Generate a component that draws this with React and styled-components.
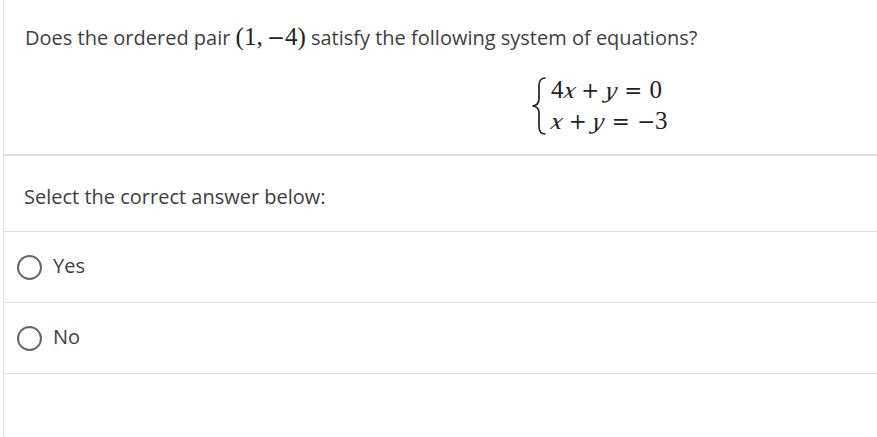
import React from "react";
import styled, { createGlobalStyle } from "styled-components";

const Global = createGlobalStyle`
  html, body { margin: 0; padding: 0; background: #fff; }
  body { font-family: "Open Sans", "Liberation Sans", sans-serif; color: #3e3e3e; }
`;

const Frame = styled.div`
  margin-left: 3px;
  border-left: 1px solid #e2e2e2;
  min-height: 437px;
  box-sizing: border-box;
`;

const Question = styled.section`
  height: 156px;
  box-sizing: border-box;
  padding: 23px 21px 0;
  border-bottom: 2px solid #dedede;
`;

const Prompt = styled.p`
  margin: 0;
  font-size: 20px;
  line-height: 28px;
  white-space: nowrap;
`;

const Math = styled.span`
  font-family: "Liberation Serif", "Times New Roman", serif;
  font-size: 25px;
  color: #222;
`;

const Thin = styled.span`
  display: inline-block;
  width: ${(p) => p.w}em;
`;

const Italic = styled.span`
  display: inline-block;
  font-family: "DejaVu Serif", serif;
  font-style: italic;
  font-size: 0.84em;
  transform: skewX(-13deg);
`;

const Sym = styled.span`
  font-family: "DejaVu Serif", serif;
  font-size: 0.86em;
`;

const Display = styled.div`
  display: flex;
  align-items: center;
  margin: 23px 0 0 506px;
  gap: 4px;
`;

const Brace = styled.svg`
  display: block;
  width: 16px;
  height: 58px;
  flex: none;
`;

const Rows = styled.div`
  display: flex;
  flex-direction: column;
  font-family: "Liberation Serif", "Times New Roman", serif;
  font-size: 25px;
  line-height: 29px;
  color: #222;
  white-space: nowrap;
`;

const Op = styled.span`
  font-family: "DejaVu Serif", serif;
  font-size: 0.86em;
  margin: 0 ${(p) => (p.$rel ? "0.34em" : "0.27em")};
`;

const Instruction = styled.div`
  height: 76px;
  display: flex;
  align-items: center;
  padding: 6px 20px 0;
  box-sizing: border-box;
  border-bottom: 1px solid #e0e0e0;
  font-size: 20px;
`;

const Option = styled.label`
  height: 71px;
  box-sizing: border-box;
  display: flex;
  align-items: center;
  gap: 11px;
  padding-left: 13px;
  border-bottom: 1px solid #e0e0e0;
  font-size: 20px;
  cursor: pointer;
`;

const Label = styled.span`
  padding-bottom: 4px;
`;

const Radio = styled.span`
  width: 25px;
  height: 25px;
  box-sizing: border-box;
  border: 2.5px solid #666;
  border-radius: 50%;
  flex: none;
`;

function Eq({ parts }) {
  return (
    <div>
      {parts.map((p, i) =>
        p.op ? (
          <Op key={i} $rel={p.rel}>
            {p.op}
          </Op>
        ) : p.it ? (
          <Italic key={i}>{p.it}</Italic>
        ) : p.sym ? (
          <Sym key={i}>{p.sym}</Sym>
        ) : (
          <span key={i}>{p.t}</span>
        )
      )}
    </div>
  );
}

export default function App() {
  return (
    <>
      <Global />
      <Frame>
        <Question>
          <Prompt>
            Does the ordered pair{" "}
            <Math>
              (1,<Thin w={0.167} />
              <Sym>−</Sym>4)
            </Math>{" "}
            satisfy the following system of equations?
          </Prompt>
          <Display>
            <Brace viewBox="0 0 16 58">
              <path
                d="M14.5,1 C9.5,1 8,3.5 8,9 L8,22 C8,26.5 6,28.6 1.5,29 C6,29.4 8,31.5 8,36 L8,49 C8,54.5 9.5,57 14.5,57"
                fill="none"
                stroke="#222"
                strokeWidth="1.7"
              />
            </Brace>
            <Rows>
              <Eq
                parts={[
                  { t: "4" },
                  { it: "x" },
                  { op: "+" },
                  { it: "y" },
                  { op: "=", rel: true },
                  { t: "0" },
                ]}
              />
              <Eq
                parts={[
                  { it: "x" },
                  { op: "+" },
                  { it: "y" },
                  { op: "=", rel: true },
                  { sym: "−" },
                  { t: "3" },
                ]}
              />
            </Rows>
          </Display>
        </Question>
        <Instruction>Select the correct answer below:</Instruction>
        <Option>
          <Radio />
          <Label>Yes</Label>
        </Option>
        <Option>
          <Radio />
          <Label>No</Label>
        </Option>
      </Frame>
    </>
  );
}
